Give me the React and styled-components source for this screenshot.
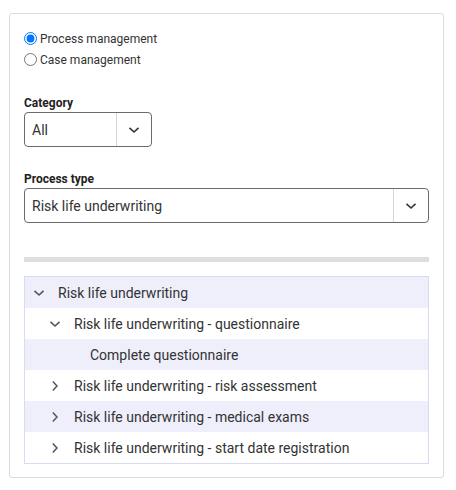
import styled, { createGlobalStyle } from "styled-components";

const GlobalStyle = createGlobalStyle`
  body {
    margin: 0;
    background: #fff;
    font-family: Roboto, "Liberation Sans", Arial, sans-serif;
    color: #333;
  }
`;

const Card = styled.div`
  box-sizing: border-box;
  width: 435px;
  margin: 13px 0 0 9px;
  padding: 14px 14px 13px 14px;
  border: 1px solid #dcdcdc;
  border-radius: 3px;
  display: flex;
  flex-direction: column;
`;

const RadioGroup = styled.div`
  display: flex;
  flex-direction: column;
`;

const RadioLabel = styled.label`
  display: flex;
  align-items: center;
  height: 21px;
  font-size: 12px;
  color: #333;
  input {
    margin: 0 3px 0 0;
    width: 13px;
    height: 13px;
  }
`;

const Field = styled.div`
  display: flex;
  flex-direction: column;
  margin-top: ${(p) => p.top}px;
`;

const Label = styled.div`
  font-size: 12px;
  font-weight: 700;
  color: #222;
  height: 17px;
  line-height: 17px;
`;

const SelectBox = styled.div`
  box-sizing: border-box;
  width: ${(p) => p.width};
  height: 35px;
  border: 1px solid #6b6b6b;
  border-radius: 4px;
  display: flex;
  align-items: stretch;
`;

const SelectValue = styled.div`
  flex: 1;
  display: flex;
  align-items: center;
  padding-left: 7px;
  font-size: 14px;
  color: #333;
`;

const SelectButton = styled.div`
  width: 34px;
  border-left: 1px solid #d6d6d6;
  display: flex;
  align-items: center;
  justify-content: center;
`;

const Bar = styled.div`
  height: 5px;
  background: #dedede;
  margin-top: 34px;
`;

const Tree = styled.div`
  margin-top: 14px;
  border: 1px solid #d8dbf6;
`;

const Row = styled.div`
  height: 31px;
  display: flex;
  align-items: center;
  padding-left: ${(p) => 8 + p.level * 16}px;
  background: ${(p) => (p.shaded ? "#efeffc" : "#fff")};
  font-size: 14px;
  color: #333;
`;

const Toggle = styled.span`
  width: 12px;
  height: 12px;
  margin-right: 13px;
  display: flex;
  align-items: center;
  justify-content: center;
`;

const ChevronDown = ({ color = "#333" }) => (
  <svg width="12" height="8" viewBox="0 0 12 8">
    <path d="M1.5 1.8 L6 6 L10.5 1.8" fill="none" stroke={color} strokeWidth="1.6" />
  </svg>
);

const ChevronRight = ({ color = "#555" }) => (
  <svg width="8" height="12" viewBox="0 0 8 12">
    <path d="M1.8 1.5 L6 6 L1.8 10.5" fill="none" stroke={color} strokeWidth="1.5" />
  </svg>
);

const rows = [
  { level: 0, open: true, text: "Risk life underwriting" },
  { level: 1, open: true, text: "Risk life underwriting - questionnaire" },
  { level: 2, leaf: true, text: "Complete questionnaire" },
  { level: 1, text: "Risk life underwriting - risk assessment" },
  { level: 1, text: "Risk life underwriting - medical exams" },
  { level: 1, text: "Risk life underwriting - start date registration" },
];

export default function App() {
  return (
    <>
      <GlobalStyle />
      <Card>
        <RadioGroup>
          <RadioLabel>
            <input type="radio" name="mode" defaultChecked />
            Process management
          </RadioLabel>
          <RadioLabel>
            <input type="radio" name="mode" />
            Case management
          </RadioLabel>
        </RadioGroup>

        <Field top={25}>
          <Label>Category</Label>
          <SelectBox width="128px">
            <SelectValue>All</SelectValue>
            <SelectButton>
              <ChevronDown />
            </SelectButton>
          </SelectBox>
        </Field>

        <Field top={24}>
          <Label>Process type</Label>
          <SelectBox width="100%">
            <SelectValue>Risk life underwriting</SelectValue>
            <SelectButton>
              <ChevronDown />
            </SelectButton>
          </SelectBox>
        </Field>

        <Bar />

        <Tree>
          {rows.map((r, i) => (
            <Row key={i} level={r.level} shaded={i % 2 === 0}>
              <Toggle>
                {r.leaf ? null : r.open ? <ChevronDown color="#555" /> : <ChevronRight />}
              </Toggle>
              {r.text}
            </Row>
          ))}
        </Tree>
      </Card>
    </>
  );
}
